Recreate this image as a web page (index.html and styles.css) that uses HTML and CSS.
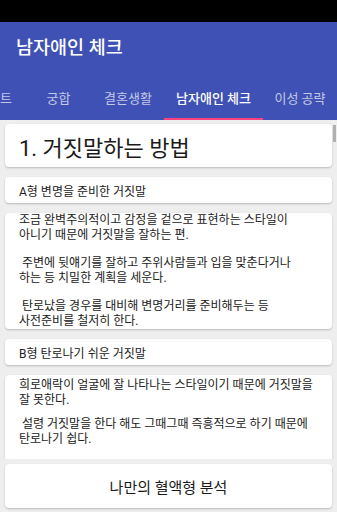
FILE: index.html
```html
<!DOCTYPE html>
<html lang="ko">
<head>
<meta charset="utf-8">
<title>남자애인 체크</title>
<link rel="stylesheet" href="styles.css">
</head>
<body>
<div class="screen">
  <div class="status"></div>
  <header class="appbar">
    <div class="toolbar"><h1 class="title">남자애인 체크</h1></div>
    <nav class="tabs">
      <div class="tab tab-cut">트</div>
      <div class="tab tab-w67">궁합</div>
      <div class="tab tab-w72">결혼생활</div>
      <div class="tab tab-w99 active">남자애인 체크</div>
      <div class="tab tab-w74">이성 공략</div>
    </nav>
  </header>
  <main class="content">
    <div class="scroller">
      <div class="card card-title">1. 거짓말하는 방법</div>
      <div class="card card-head">A형 변명을 준비한 거짓말</div>
      <div class="card card-body card-body-a">
        <p>조금 완벽주의적이고 감정을 겉으로 표현하는 스타일이<br>아니기 때문에 거짓말을 잘하는 편.</p>
        <p>&nbsp;주변에 뒷얘기를 잘하고 주위사람들과 입을 맞춘다거나<br>하는 등 치밀한 계획을 세운다.</p>
        <p>&nbsp;탄로났을 경우를 대비해 변명거리를 준비해두는 등<br>사전준비를 철저히 한다.</p>
      </div>
      <div class="card card-head">B형 탄로나기 쉬운 거짓말</div>
      <div class="card card-body card-body-b">
        <p>희로애락이 얼굴에 잘 나타나는 스타일이기 때문에 거짓말을<br>잘 못한다.</p>
        <p>&nbsp;설령 거짓말을 한다 해도 그때그때 즉흥적으로 하기 때문에<br>탄로나기 쉽다.</p>
      </div>
      <div class="scrollthumb"></div>
    </div>
    <div class="card card-button">나만의 혈액형 분석</div>
  </main>
</div>
</body>
</html>
```
FILE: styles.css
```css
html, body {
  margin: 0;
  padding: 0;
}
body {
  width: 337px;
  height: 512px;
  overflow: hidden;
  font-family: Roboto, "Noto Sans CJK KR", sans-serif;
  background: #eeeeee;
}
.screen {
  width: 337px;
  height: 512px;
  display: flex;
  flex-direction: column;
}
.status {
  height: 22px;
  background: #000;
  flex: none;
}
.appbar {
  background: #3f51b5;
  flex: none;
}
.toolbar {
  height: 53px;
  display: flex;
  align-items: center;
  padding-left: 16px;
}
.title {
  margin: 0;
  font-size: 18.5px;
  font-weight: 500;
  color: #fff;
  line-height: 1;
  padding-bottom: 1px;
}
.tabs {
  height: 45px;
  display: flex;
  overflow: hidden;
}
.tab {
  flex: none;
  box-sizing: border-box;
  height: 45px;
  display: flex;
  align-items: center;
  justify-content: center;
  font-size: 13px;
  color: rgba(255,255,255,0.7);
  border-bottom: 2px solid transparent;
  padding-top: 2px;
  white-space: nowrap;
}
.tab-cut { width: 25px; justify-content: flex-start; }
.tab-w67 { width: 67px; }
.tab-w72 { width: 72px; }
.tab-w99 { width: 99px; }
.tab-w74 { width: 74px; }
.tab.active {
  color: #fff;
  font-weight: 500;
  border-bottom-color: #ff4081;
}
.content {
  flex: 1;
  display: flex;
  flex-direction: column;
  background: #eeeeee;
}
.scroller {
  position: relative;
  height: 339px;
  overflow: hidden;
  padding-top: 4px;
  box-sizing: border-box;
  flex: none;
}
.card {
  background: #fff;
  margin: 0 5px 10px 5px;
  border-radius: 4px;
  box-shadow: 0 1px 2px rgba(0,0,0,0.22);
  box-sizing: border-box;
  overflow: hidden;
  color: #212121;
}
.card-title {
  height: 43px;
  font-size: 22px;
  padding-left: 14px;
  display: flex;
  align-items: center;
  color: #1a1a1a;
}
.card-head {
  height: 26px;
  font-size: 12px;
  padding-left: 14px;
  display: flex;
  align-items: center;
}
.card-body {
  font-size: 12px;
  line-height: 15px;
  padding: 0 10px 0 14px;
}
.card-body-a {
  height: 116px;
}
.card-body-a p {
  margin: 0 0 13px 0;
}
.card-body-b {
  height: 120px;
  padding-top: 3px;
}
.card-body-b p {
  margin: 0 0 9px 0;
}
.scrollthumb {
  position: absolute;
  right: 1px;
  top: 5px;
  width: 3px;
  height: 17px;
  background: #b0b0b0;
}
.card-button {
  margin-top: 5px;
  height: 44px;
  font-size: 15px;
  display: flex;
  align-items: center;
  justify-content: center;
  color: #1a1a1a;
}
```
